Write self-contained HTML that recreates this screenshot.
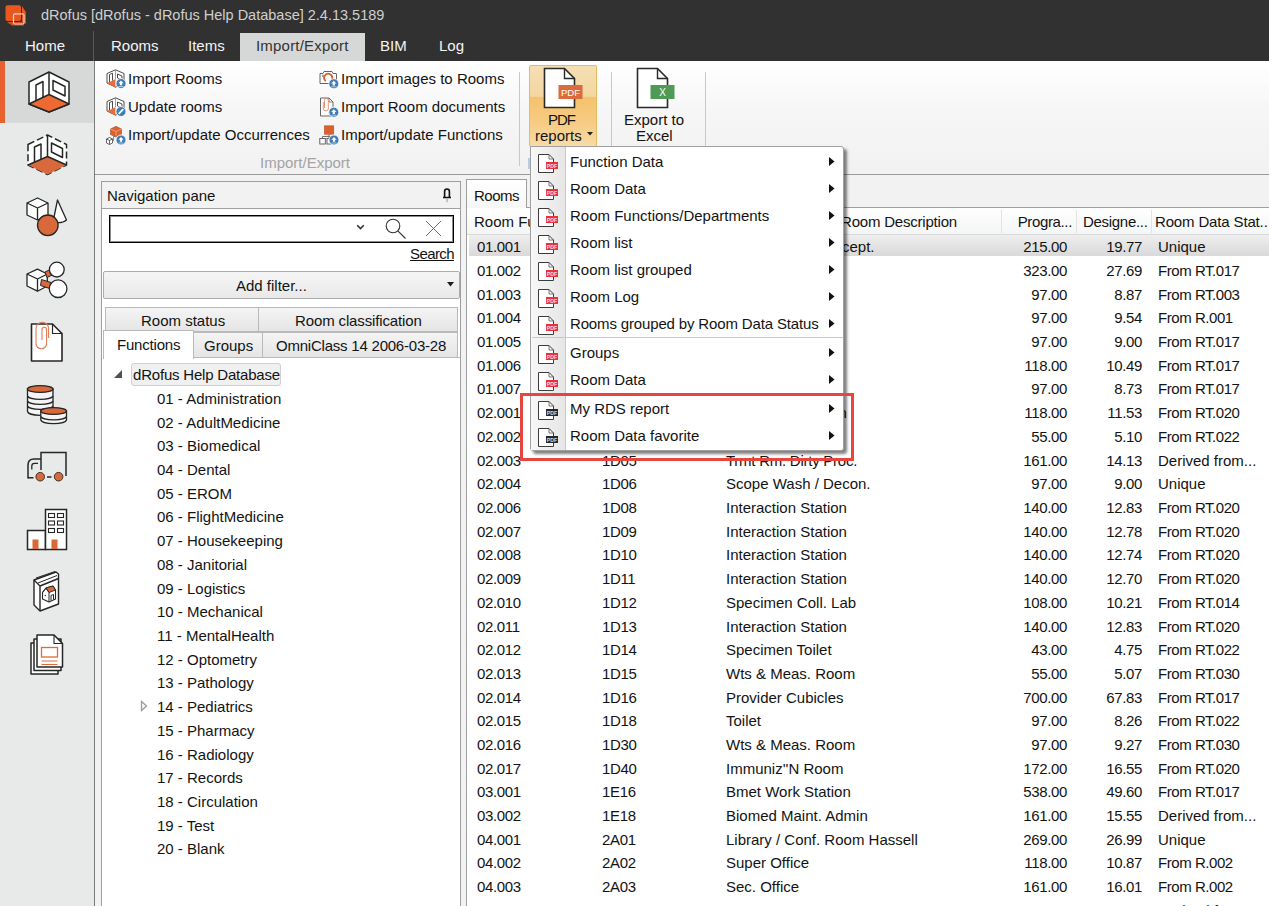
<!DOCTYPE html><html><head><meta charset="utf-8"><style>
html,body{margin:0;padding:0;}
body{width:1269px;height:906px;overflow:hidden;position:relative;background:#f2f2f2;font-family:"Liberation Sans",sans-serif;}
.t{position:absolute;white-space:nowrap;line-height:normal;}
.b{position:absolute;box-sizing:border-box;}
svg{position:absolute;overflow:visible;}
</style></head><body>
<div class="b" style="left:0px;top:0px;width:1269px;height:61px;background:#313131;"></div>
<svg style="left:0;top:0" width="40" height="32">
<path d="M22 6 L25.8 12 L25.8 24 L22 22Z" fill="#e8581f"/>
<path d="M7 22 L22 22 L24.5 25.5 L12 25.5Z" fill="#e8581f" opacity="0.9"/>
<rect x="5.5" y="5.3" width="15.5" height="15.7" rx="2" fill="#e8581f"/>
<rect x="13.5" y="13.8" width="10.5" height="10.2" rx="1.5" fill="none" stroke="#f5d3c2" stroke-width="1.2"/>
</svg>
<div class="t " style="left:41px;top:7.38px;font-size:14.5px;color:#cfcfcf;">dRofus [dRofus - dRofus Help Database] 2.4.13.5189</div>
<div class="b" style="left:93px;top:31px;width:1px;height:30px;background:#5a5a5a;"></div>
<div class="t " style="left:25px;top:36.92px;font-size:15px;color:#f4f4f4;">Home</div>
<div class="t " style="left:111px;top:36.92px;font-size:15px;color:#f4f4f4;">Rooms</div>
<div class="t " style="left:188px;top:36.92px;font-size:15px;color:#f4f4f4;">Items</div>
<div class="b" style="left:240px;top:33px;width:125px;height:28px;background:#d6d7d7;"></div>
<div class="t " style="left:256px;top:36.92px;font-size:15px;color:#333333;letter-spacing:0.2px;">Import/Export</div>
<div class="t " style="left:380px;top:36.92px;font-size:15px;color:#f4f4f4;">BIM</div>
<div class="t " style="left:439px;top:36.92px;font-size:15px;color:#f4f4f4;">Log</div>
<div class="b" style="left:0px;top:61px;width:94px;height:845px;background:#e8e9e9;"></div>
<div class="b" style="left:94px;top:61px;width:1px;height:845px;background:#7b7b7b;"></div>
<div class="b" style="left:0px;top:61px;width:94px;height:62px;background:#d7d9d9;"></div>
<div class="b" style="left:0px;top:61px;width:5px;height:62px;background:#e8602c;"></div>
<div class="b" style="left:95px;top:61px;width:1174px;height:113px;background:linear-gradient(#ffffff 0%,#f6f6f6 45%,#f1f1f1 100%);"></div>
<div class="b" style="left:95px;top:174px;width:1174px;height:1px;background:#9a9a9a;"></div>
<svg style="left:0;top:0" width="94" height="700">
<g stroke="#262626" stroke-width="1.5" stroke-linejoin="round" fill="#fff">
<path d="M29 82 L49 72 L69 82 L69 104 L49 112 L29 104Z"/>
<path d="M29 104 L49 94.5 L69 104 L49 112Z" fill="#ef6a33"/>
<path d="M49 72 L49 94.5" fill="none"/>
<path d="M36 100.5 L36 85 L43 81.5 L43 97.3" fill="none"/>
<path d="M53 80.5 L65 86.5 L65 96 L53 90Z" fill="none"/>
</g>
<g stroke="#262626" stroke-width="1.5" stroke-linejoin="round" fill="#fff" stroke-dasharray="7 3">
<path d="M28 144.5 L47.5 135 L66.5 144.5 L66.5 165 L47.5 174.5 L28 165Z"/>
</g>
<g stroke="#262626" stroke-width="1.5" stroke-linejoin="round" fill="#fff">
<path d="M28 165 L47.5 156.5 L66.5 165 L47.5 174.5Z" fill="#d9693a" stroke="none"/>
<path d="M28 165 L47.5 156.5 L66.5 165" fill="none"/>
<path d="M47.5 135 L47.5 156.5" fill="none"/>
<path d="M34.5 162 L34.5 147 L41 144 L41 159" fill="none"/>
<path d="M51.5 143 L62.5 148.5 L62.5 157.5 L51.5 152Z" fill="none"/>
</g>
<g stroke="#262626" stroke-width="1.3" stroke-linejoin="round" fill="#fff">
<path d="M57.5 200 L66.5 220 Q62 224 53 222 Z"/>
<path d="M27 203 L37.5 198 L48 203 L48 215 L37.5 220 L27 215Z"/>
<path d="M27 203 L37.5 208 L48 203 M37.5 208 L37.5 220" fill="none"/>
<circle cx="47.8" cy="225.3" r="10.3" fill="#d9693a"/>
</g>
<g stroke="#262626" stroke-width="1.3" stroke-linejoin="round" fill="#fff">
<path d="M27 274 L37.5 269.2 L47.3 274 L47.3 286 L37.5 291.2 L27 286Z"/>
<path d="M27 274 L37.5 279 L47.3 274 M37.5 279 L37.5 291.2" fill="none"/>
<path d="M45 272 L53.5 268 L55.5 273.5 L47 277.5Z" fill="#d9693a" stroke-width="1"/>
<path d="M41.5 279.5 L51 282.5 L49.8 288.5 L40.5 285.5Z" fill="#d9693a" stroke-width="1"/>
<circle cx="56.8" cy="269.6" r="7.4"/>
<circle cx="58.1" cy="288.7" r="8.8"/>
</g>
<g stroke="#262626" stroke-width="1.6" stroke-linejoin="round" fill="#fff">
<path d="M31.5 324 L52.5 324 L62 333.5 L62 361 L31.5 361Z"/>
<path d="M52.5 324 L52.5 333.5 L62 333.5" fill="none" stroke-width="1.2"/>
</g>
<path d="M42 340 L42 329.5 A2.3 2.3 0 0 1 46.6 329.5 L46.6 343.5 A5.3 5.3 0 0 1 36 343.5 L36 328.5 A6.3 6.3 0 0 1 48.6 328.5 L48.6 338" fill="none" stroke="#e07b55" stroke-width="1.1"/>
<g stroke="#262626" stroke-width="1.3" fill="#f4f4f4">
<path d="M27.5 389 L27.5 411.5 A12.8 4.2 0 0 0 53 411.5 L53 389Z"/>
<path d="M27.5 396 A12.8 3.6 0 0 0 53 396 M27.5 401 A12.8 3.6 0 0 0 53 401 M27.5 406 A12.8 3.6 0 0 0 53 406" fill="none"/>
<ellipse cx="40.2" cy="389" rx="12.8" ry="3.4" fill="#d9693a"/>
<path d="M40.8 411 L40.8 420 A12.9 4 0 0 0 66.5 420 L66.5 411Z"/>
<path d="M40.8 416.5 A12.9 3.6 0 0 0 66.5 416.5" fill="none"/>
<ellipse cx="53.6" cy="411" rx="12.9" ry="3.4" fill="#d9693a"/>
</g>
<g stroke="#262626" stroke-width="1.5" fill="none">
<path d="M41 470 L41 452.5 L66 452.5 L66 476"/>
<path d="M28 478.5 L28 465 Q28 459 34 459 L41 459"/>
<path d="M31.8 469.5 L31.8 466 Q31.8 463.3 34.5 463.3 L38 463.3" stroke-width="1.3"/>
<path d="M28 477.8 L33.5 477.8 M47 477 L51.5 477"/>
</g>
<circle cx="40.2" cy="476.7" r="4.3" fill="#d9693a" stroke="#262626" stroke-width="0.9"/>
<circle cx="58.6" cy="476.7" r="4.3" fill="#d9693a" stroke="#262626" stroke-width="0.9"/>
<g stroke="#262626" stroke-width="1.5" fill="#fff">
<rect x="27.5" y="530.5" width="18" height="19"/>
<rect x="45.5" y="509.5" width="21" height="40"/>
</g>
<g stroke="#262626" stroke-width="1.1" fill="#fff">
<rect x="48.5" y="513.5" width="6" height="4"/><rect x="57.5" y="513.5" width="6" height="4"/>
<rect x="48.5" y="521" width="6" height="4"/><rect x="57.5" y="521" width="6" height="4"/>
<rect x="48.5" y="528.5" width="6" height="4"/><rect x="57.5" y="528.5" width="6" height="4"/>
</g>
<rect x="32.5" y="539.5" width="6" height="9.5" fill="#d9693a"/>
<rect x="51.5" y="539.5" width="6" height="9.5" fill="#d9693a"/>
<g stroke="#262626" stroke-width="1.4" stroke-linejoin="round" fill="#fff">
<path d="M56 572 L58.5 574 L58.5 604 L40 611 L34 605 L34 580Z"/>
<path d="M34 580 L40 586 L58.5 578.5 M40 586 L40 611" fill="none"/>
<path d="M36 578 L55 571.5 M38 583 L57 575.5" fill="none" stroke-width="1"/>
<path d="M42.5 592.5 L46 588 L53 586 L55.5 590 L55.5 599 L49 602 L42.5 599Z" stroke-width="1.1"/>
<path d="M46 588 L53 586 L55.5 590 L49 592.5Z" fill="#d9693a" stroke-width="0.9"/>
<path d="M42.5 592.5 L46 588 L49 592.5 L49 602" fill="none" stroke-width="1"/>
<path d="M51 600.5 L51 595.5 L53.5 594.5 L53.5 599.5" fill="none" stroke-width="1"/>
<circle cx="45.3" cy="595.5" r="0.7" fill="#262626" stroke="none"/>
</g>
<g stroke="#262626" stroke-width="1.5" stroke-linejoin="round" fill="#fff">
<path d="M31 643 L31 674 L58 674 L58 643Z" fill="#fff"/>
<path d="M34 639 L34 670.5 L61 670.5 L61 639Z"/>
<path d="M37 635 L54 635 L62.5 643.5 L62.5 667 L37 667Z"/>
<path d="M54 635 L54 643.5 L62.5 643.5" fill="none" stroke-width="1.1"/>
</g>
<rect x="41.5" y="647.5" width="16" height="9.5" fill="none" stroke="#e06a3a" stroke-width="1.3"/>
<path d="M41.5 661 L57.5 661 M41.5 664.5 L57.5 664.5" stroke="#e06a3a" stroke-width="1.1"/>
</svg>
<!--BODY-->
<svg style="left:106px;top:69px" width="21" height="21"><g stroke="#3a3a3a" stroke-width="0.9" fill="#fff">
<path d="M1 4.5 L9.5 0.8 L18 4.5 L18 14 L9.5 18.2 L1 14Z"/>
<path d="M1 14 L9.5 10 L9.5 18.2Z" fill="#ef6b35" stroke="none"/>
<path d="M9.5 0.8 L9.5 10" stroke="#999"/>
<path d="M3.5 13 L3.5 5.5 L6.5 4.2 L6.5 11.6"/>
<path d="M11.5 5 L16 7 L16 11 L11.5 9Z"/>
</g><circle cx="15" cy="14.5" r="5" fill="#3f7db6" stroke="#fff" stroke-width="0.8"/><path d="M15 11.5 L17.6 14.3 L16.1 14.3 L16.1 16.3 L13.9 16.3 L13.9 14.3 L12.4 14.3Z" fill="#fff"/><path d="M12.5 17.5 L17.5 17.5" stroke="#fff" stroke-width="0.6"/></svg>
<div class="t " style="left:128px;top:70.42px;font-size:15px;color:#131313;">Import Rooms</div>
<svg style="left:106px;top:97px" width="21" height="21"><g stroke="#3a3a3a" stroke-width="0.9" fill="#fff">
<path d="M1 4.5 L9.5 0.8 L18 4.5 L18 14 L9.5 18.2 L1 14Z"/>
<path d="M1 14 L9.5 10 L9.5 18.2Z" fill="#ef6b35" stroke="none"/>
<path d="M9.5 0.8 L9.5 10" stroke="#999"/>
<path d="M3.5 13 L3.5 5.5 L6.5 4.2 L6.5 11.6"/>
<path d="M11.5 5 L16 7 L16 11 L11.5 9Z"/>
</g><circle cx="15" cy="14.5" r="5" fill="#3f7db6" stroke="#fff" stroke-width="0.8"/><path d="M12.7 16.8 L17.3 12.2" stroke="#fff" stroke-width="1.8"/></svg>
<div class="t " style="left:128px;top:98.42px;font-size:15px;color:#131313;">Update rooms</div>
<svg style="left:106px;top:125px" width="21" height="21"><path d="M4.5 4 L10 1.3 L15.5 4 L15.5 9.5 L10 12 L4.5 9.5Z" fill="#d9622f" stroke="#a84a22" stroke-width="0.6"/>
<path d="M4.5 4 L10 6.5 L15.5 4 M10 6.5 L10 12" stroke="#f3b595" stroke-width="0.7" fill="none"/>
<path d="M0.5 14 L3.5 12.5 L6.5 14 L6.5 18 L3.5 19.5 L0.5 18Z M0.5 14 L3.5 15.5 L6.5 14 M3.5 15.5 L3.5 19.5" fill="#fff" stroke="#444" stroke-width="0.8"/>
<path d="M7.5 16 L7.5 11.5 L10 11" fill="none" stroke="#666" stroke-width="0.7"/><circle cx="15" cy="15" r="5" fill="#3f7db6" stroke="#fff" stroke-width="0.8"/><path d="M15 12 L17.6 14.8 L16.1 14.8 L16.1 16.8 L13.9 16.8 L13.9 14.8 L12.4 14.8Z" fill="#fff"/><path d="M12.5 18 L17.5 18" stroke="#fff" stroke-width="0.6"/></svg>
<div class="t " style="left:128px;top:126.42px;font-size:15px;color:#131313;">Import/update Occurrences</div>
<svg style="left:319px;top:69px" width="21" height="21"><path d="M1 4.5 L4 4.5 L5 2.5 L13 2.5 L14 4.5 L17 4.5 Q17.5 4.5 17.5 5 L17.5 14.5 L1 14.5Z" fill="#fff" stroke="#555" stroke-width="0.9" stroke-linejoin="round"/>
<circle cx="4" cy="6.8" r="0.9" fill="none" stroke="#555" stroke-width="0.6"/>
<path d="M6.8 12 A4 4 0 1 1 13 10" fill="none" stroke="#d9622f" stroke-width="1.8"/><circle cx="14.8" cy="14.8" r="5" fill="#3f7db6" stroke="#fff" stroke-width="0.8"/><path d="M14.8 11.8 L17.400000000000002 14.600000000000001 L15.9 14.600000000000001 L15.9 16.6 L13.700000000000001 16.6 L13.700000000000001 14.600000000000001 L12.200000000000001 14.600000000000001Z" fill="#fff"/><path d="M12.3 17.8 L17.3 17.8" stroke="#fff" stroke-width="0.6"/></svg>
<div class="t " style="left:341px;top:70.42px;font-size:15px;color:#131313;">Import images to Rooms</div>
<svg style="left:319px;top:97px" width="21" height="21"><path d="M1.5 1 L10 1 L14 5 L14 19 L1.5 19Z" fill="#fff" stroke="#555" stroke-width="0.9" stroke-linejoin="round"/>
<path d="M10 1 L10 5 L14 5" fill="none" stroke="#555" stroke-width="0.7"/>
<path d="M5.5 11 L5.5 3.5 Q5.5 1.2 7.4 1.2 Q9.3 1.2 9.3 3.5 L9.3 12 Q9.3 13.8 7.2 13.8 Q4.3 13.8 4.3 12 L4.3 5" fill="none" stroke="#e58a66" stroke-width="0.9"/><circle cx="14.8" cy="15.2" r="5" fill="#3f7db6" stroke="#fff" stroke-width="0.8"/><path d="M14.8 12.2 L17.400000000000002 15.0 L15.9 15.0 L15.9 17.0 L13.700000000000001 17.0 L13.700000000000001 15.0 L12.200000000000001 15.0Z" fill="#fff"/><path d="M12.3 18.2 L17.3 18.2" stroke="#fff" stroke-width="0.6"/></svg>
<div class="t " style="left:341px;top:98.42px;font-size:15px;color:#131313;">Import Room documents</div>
<svg style="left:319px;top:125px" width="21" height="21"><rect x="5.3" y="0.8" width="9.5" height="8.5" fill="#d9622f" stroke="#b85125" stroke-width="0.5"/>
<path d="M10 9.3 L10 11.5 M3.5 11.5 L16.5 11.5 M3.5 11.5 L3.5 13.5 M10 11.5 L10 13.5" stroke="#666" stroke-width="0.9" fill="none"/>
<rect x="0.8" y="13.5" width="5.5" height="5.5" fill="#fff" stroke="#555" stroke-width="0.9"/>
<rect x="8" y="13.5" width="4" height="5.5" fill="#fff" stroke="#555" stroke-width="0.9"/><circle cx="15" cy="15" r="5" fill="#3f7db6" stroke="#fff" stroke-width="0.8"/><path d="M15 12 L17.6 14.8 L16.1 14.8 L16.1 16.8 L13.9 16.8 L13.9 14.8 L12.4 14.8Z" fill="#fff"/><path d="M12.5 18 L17.5 18" stroke="#fff" stroke-width="0.6"/></svg>
<div class="t " style="left:341px;top:126.42px;font-size:15px;color:#131313;">Import/update Functions</div>
<div class="t " style="left:260px;top:154.43px;font-size:15px;color:#a3a3a3;">Import/Export</div>
<div class="b" style="left:519px;top:72px;width:1px;height:94px;background:#c8c8c8;"></div>
<div class="b" style="left:611px;top:72px;width:1px;height:74px;background:#c8c8c8;"></div>
<div class="b" style="left:705px;top:72px;width:1px;height:74px;background:#c8c8c8;"></div>
<div class="b" style="left:529px;top:65px;width:68px;height:82px;border:1px solid #e3bd5c;border-radius:2px;background:linear-gradient(#f5dfb4 0%,#f3d6a1 38%,#f5c26c 39%,#f6cb83 70%,#f8dba6 100%);"></div>
<svg style="left:543px;top:67px" width="42" height="44">
<path d="M1.5 1.5 L21.5 1.5 L31.5 11.5 L31.5 40.5 L1.5 40.5Z" fill="#fff" stroke="#2a2a2a" stroke-width="1.6"/>
<path d="M21.5 1.5 L21.5 11.5 L31.5 11.5" fill="none" stroke="#2a2a2a" stroke-width="1.4"/>
<rect x="15.5" y="18" width="24" height="14" fill="#dc6a3c"/>
<text x="27.5" y="28.5" font-family="Liberation Sans" font-size="9.5" fill="#fff" text-anchor="middle">PDF</text>
</svg>
<div class="t " style="left:548px;top:110.92px;font-size:15px;color:#131313;letter-spacing:-1px;">PDF</div>
<div class="t " style="left:535px;top:126.92px;font-size:15px;color:#131313;">reports</div>
<svg style="left:587px;top:132px" width="6" height="4"><path d="M0 0 L6 0 L3 3.5Z" fill="#222"/></svg>
<svg style="left:636px;top:67px" width="42" height="44">
<path d="M1.5 1.5 L21.5 1.5 L31.5 11.5 L31.5 40.5 L1.5 40.5Z" fill="#fff" stroke="#2a2a2a" stroke-width="1.6"/>
<path d="M21.5 1.5 L21.5 11.5 L31.5 11.5" fill="none" stroke="#2a2a2a" stroke-width="1.4"/>
<rect x="14.5" y="18" width="24" height="14" fill="#4f9b56"/>
<text x="26.5" y="28.5" font-family="Liberation Sans" font-size="10" fill="#fff" text-anchor="middle">X</text>
</svg>
<div class="t " style="left:624px;top:110.92px;font-size:15px;color:#131313;">Export to</div>
<div class="t " style="left:636px;top:126.92px;font-size:15px;color:#131313;">Excel</div>
<div class="b" style="left:101px;top:181px;width:360px;height:725px;border:1px solid #9e9e9e;border-bottom:none;background:#fff;"></div>
<div class="b" style="left:102px;top:182px;width:358px;height:27px;background:#f2f2f2;border-bottom:1px solid #a0a0a0;"></div>
<div class="t " style="left:107px;top:187.43px;font-size:15px;color:#131313;">Navigation pane</div>
<svg style="left:441px;top:187px" width="12" height="16"><path d="M3.6 10 L3.6 4.5 Q3.6 2 6 2 Q8.4 2 8.4 4.5 L8.4 10" fill="none" stroke="#111" stroke-width="1.6"/><path d="M2 10.5 L10 10.5" stroke="#111" stroke-width="1.5"/><rect x="5.4" y="11.2" width="1.3" height="4" fill="#aaa"/></svg>
<div class="b" style="left:109px;top:215px;width:345px;height:28px;border:1px solid #000;box-shadow:inset 0 0 0 1px rgba(0,0,0,0.45);background:#fff;"></div>
<svg style="left:356px;top:224px" width="10" height="7"><path d="M1.2 1.2 L4.5 4.5 L7.8 1.2" fill="none" stroke="#333" stroke-width="1.6"/></svg>
<svg style="left:383px;top:216px" width="26" height="26"><circle cx="10" cy="10" r="6.8" fill="none" stroke="#333" stroke-width="1.1"/><path d="M14.8 14.8 L22.5 22.5" stroke="#333" stroke-width="1.1"/></svg>
<svg style="left:424px;top:219px" width="20" height="20"><path d="M2 2 L17 17 M17 2 L2 17" stroke="#5a5a5a" stroke-width="0.9"/></svg>
<div class="t" style="right:815px;top:244.93px;font-size:15px;color:#131313;text-align:right;text-decoration:underline;letter-spacing:-0.6px;">Search</div>
<div class="b" style="left:103px;top:271px;width:357px;height:28px;border:1px solid #adadad;border-radius:2px;background:linear-gradient(#f5f5f5,#e9e9e9);"></div>
<div class="t " style="left:236px;top:276.93px;font-size:15px;color:#131313;">Add filter...</div>
<svg style="left:447px;top:282px" width="8" height="5"><path d="M0 0 L7 0 L3.5 4.5Z" fill="#1d1d1d"/></svg>
<div class="b" style="left:105px;top:307px;width:154px;height:25px;background:linear-gradient(#f4f4f4,#e5e5e5);border:1px solid #b9b9b9;"></div>
<div class="b" style="left:258px;top:307px;width:200px;height:25px;background:linear-gradient(#f4f4f4,#e5e5e5);border:1px solid #b9b9b9;"></div>
<div class="t " style="left:141px;top:311.93px;font-size:15px;color:#131313;">Room status</div>
<div class="t " style="left:295px;top:311.93px;font-size:15px;color:#131313;letter-spacing:-0.13px;">Room classification</div>
<div class="b" style="left:193px;top:332px;width:70px;height:26px;background:linear-gradient(#f4f4f4,#e5e5e5);border:1px solid #b9b9b9;"></div>
<div class="b" style="left:262px;top:332px;width:196px;height:26px;background:linear-gradient(#f4f4f4,#e5e5e5);border:1px solid #b9b9b9;"></div>
<div class="b" style="left:103px;top:330px;width:91px;height:29px;background:#fff;border:1px solid #b9b9b9;border-bottom:none;"></div>
<div class="t " style="left:117px;top:336.43px;font-size:15px;color:#131313;letter-spacing:-0.2px;">Functions</div>
<div class="t " style="left:204px;top:336.93px;font-size:15px;color:#131313;">Groups</div>
<div class="t " style="left:276px;top:336.93px;font-size:15px;color:#131313;letter-spacing:-0.22px;">OmniClass 14 2006-03-28</div>
<div class="b" style="left:262px;top:357px;width:198px;height:1px;background:#b9b9b9;"></div>
<svg style="left:113px;top:369px" width="10" height="10"><path d="M9 1 L9 9 L1 9Z" fill="#505050"/></svg>
<div class="b" style="left:131px;top:363px;width:150px;height:23px;background:#f0f0f0;border:1px solid #d0d0d0;border-radius:3px;"></div>
<div class="t " style="left:133px;top:366.43px;font-size:15px;color:#131313;letter-spacing:-0.2px;">dRofus Help Database</div>
<div class="t " style="left:157px;top:390.43px;font-size:15px;color:#131313;">01 - Administration</div>
<div class="t " style="left:157px;top:414.43px;font-size:15px;color:#131313;">02 - AdultMedicine</div>
<div class="t " style="left:157px;top:437.43px;font-size:15px;color:#131313;">03 - Biomedical</div>
<div class="t " style="left:157px;top:461.43px;font-size:15px;color:#131313;">04 - Dental</div>
<div class="t " style="left:157px;top:485.43px;font-size:15px;color:#131313;">05 - EROM</div>
<div class="t " style="left:157px;top:508.43px;font-size:15px;color:#131313;">06 - FlightMedicine</div>
<div class="t " style="left:157px;top:532.42px;font-size:15px;color:#131313;">07 - Housekeeping</div>
<div class="t " style="left:157px;top:556.42px;font-size:15px;color:#131313;">08 - Janitorial</div>
<div class="t " style="left:157px;top:580.42px;font-size:15px;color:#131313;">09 - Logistics</div>
<div class="t " style="left:157px;top:603.42px;font-size:15px;color:#131313;">10 - Mechanical</div>
<div class="t " style="left:157px;top:627.42px;font-size:15px;color:#131313;">11 - MentalHealth</div>
<div class="t " style="left:157px;top:651.42px;font-size:15px;color:#131313;">12 - Optometry</div>
<div class="t " style="left:157px;top:674.42px;font-size:15px;color:#131313;">13 - Pathology</div>
<div class="t " style="left:157px;top:698.42px;font-size:15px;color:#131313;">14 - Pediatrics</div>
<div class="t " style="left:157px;top:722.42px;font-size:15px;color:#131313;">15 - Pharmacy</div>
<div class="t " style="left:157px;top:746.42px;font-size:15px;color:#131313;">16 - Radiology</div>
<div class="t " style="left:157px;top:769.42px;font-size:15px;color:#131313;">17 - Records</div>
<div class="t " style="left:157px;top:793.42px;font-size:15px;color:#131313;">18 - Circulation</div>
<div class="t " style="left:157px;top:817.42px;font-size:15px;color:#131313;">19 - Test</div>
<div class="t " style="left:157px;top:840.42px;font-size:15px;color:#131313;">20 - Blank</div>
<svg style="left:140px;top:700px" width="8" height="12"><path d="M1.5 1.5 L6.5 6 L1.5 10.5Z" fill="none" stroke="#9a9a9a" stroke-width="1.3"/></svg>
<div class="b" style="left:466px;top:207px;width:803px;height:699px;border-left:1px solid #9e9e9e;border-top:1px solid #9e9e9e;background:#fff;"></div>
<div class="b" style="left:466px;top:179px;width:61px;height:29px;border:1px solid #9e9e9e;border-bottom:none;background:linear-gradient(#ffffff,#f6f6f6);"></div>
<div class="t " style="left:474px;top:187.43px;font-size:15px;color:#131313;letter-spacing:-0.5px;">Rooms</div>
<div class="b" style="left:467px;top:208px;width:802px;height:27px;background:linear-gradient(#ffffff,#f4f5f6);border-bottom:1px solid #dadada;"></div>
<div class="b" style="left:1001px;top:210px;width:1px;height:23px;background:#e2e2e2;"></div>
<div class="b" style="left:1076px;top:210px;width:1px;height:23px;background:#e2e2e2;"></div>
<div class="b" style="left:1151px;top:210px;width:1px;height:23px;background:#e2e2e2;"></div>
<div class="t " style="left:474px;top:212.93px;font-size:15px;color:#131313;">Room Function No.</div>
<div class="t " style="left:841px;top:212.93px;font-size:15px;color:#131313;letter-spacing:-0.2px;">Room Description</div>
<div class="t" style="right:197px;top:212.93px;font-size:15px;color:#131313;text-align:right;letter-spacing:-0.35px;">Progra...</div>
<div class="t " style="left:1083px;top:212.93px;font-size:15px;color:#131313;letter-spacing:-0.3px;">Designe...</div>
<div class="t " style="left:1155px;top:212.93px;font-size:15px;color:#131313;letter-spacing:-0.15px;">Room Data Stat...</div>
<div class="b" style="left:469px;top:235px;width:800px;height:21px;background:linear-gradient(#eeeeee,#d9d9d9);"></div>
<div class="t " style="left:477px;top:238.43px;font-size:15px;color:#131313;letter-spacing:-0.35px;">01.001</div>
<div class="t " style="left:842px;top:238.43px;font-size:15px;color:#131313;">cept.</div>
<div class="t" style="right:202px;top:238.43px;font-size:15px;color:#131313;text-align:right;letter-spacing:-0.35px;">215.00</div>
<div class="t" style="right:127px;top:238.43px;font-size:15px;color:#131313;text-align:right;letter-spacing:-0.35px;">19.77</div>
<div class="t " style="left:1158px;top:238.43px;font-size:15px;color:#131313;">Unique</div>
<div class="t " style="left:477px;top:262.43px;font-size:15px;color:#131313;letter-spacing:-0.35px;">01.002</div>
<div class="t" style="right:202px;top:262.43px;font-size:15px;color:#131313;text-align:right;letter-spacing:-0.35px;">323.00</div>
<div class="t" style="right:127px;top:262.43px;font-size:15px;color:#131313;text-align:right;letter-spacing:-0.35px;">27.69</div>
<div class="t " style="left:1158px;top:262.43px;font-size:15px;color:#131313;letter-spacing:-0.45px;">From RT.017</div>
<div class="t " style="left:477px;top:286.43px;font-size:15px;color:#131313;letter-spacing:-0.35px;">01.003</div>
<div class="t" style="right:202px;top:286.43px;font-size:15px;color:#131313;text-align:right;letter-spacing:-0.35px;">97.00</div>
<div class="t" style="right:127px;top:286.43px;font-size:15px;color:#131313;text-align:right;letter-spacing:-0.35px;">8.87</div>
<div class="t " style="left:1158px;top:286.43px;font-size:15px;color:#131313;letter-spacing:-0.45px;">From RT.003</div>
<div class="t " style="left:477px;top:309.43px;font-size:15px;color:#131313;letter-spacing:-0.35px;">01.004</div>
<div class="t" style="right:202px;top:309.43px;font-size:15px;color:#131313;text-align:right;letter-spacing:-0.35px;">97.00</div>
<div class="t" style="right:127px;top:309.43px;font-size:15px;color:#131313;text-align:right;letter-spacing:-0.35px;">9.54</div>
<div class="t " style="left:1158px;top:309.43px;font-size:15px;color:#131313;letter-spacing:-0.45px;">From R.001</div>
<div class="t " style="left:477px;top:333.43px;font-size:15px;color:#131313;letter-spacing:-0.35px;">01.005</div>
<div class="t" style="right:202px;top:333.43px;font-size:15px;color:#131313;text-align:right;letter-spacing:-0.35px;">97.00</div>
<div class="t" style="right:127px;top:333.43px;font-size:15px;color:#131313;text-align:right;letter-spacing:-0.35px;">9.00</div>
<div class="t " style="left:1158px;top:333.43px;font-size:15px;color:#131313;letter-spacing:-0.45px;">From RT.017</div>
<div class="t " style="left:477px;top:357.43px;font-size:15px;color:#131313;letter-spacing:-0.35px;">01.006</div>
<div class="t" style="right:202px;top:357.43px;font-size:15px;color:#131313;text-align:right;letter-spacing:-0.35px;">118.00</div>
<div class="t" style="right:127px;top:357.43px;font-size:15px;color:#131313;text-align:right;letter-spacing:-0.35px;">10.49</div>
<div class="t " style="left:1158px;top:357.43px;font-size:15px;color:#131313;letter-spacing:-0.45px;">From RT.017</div>
<div class="t " style="left:477px;top:380.43px;font-size:15px;color:#131313;letter-spacing:-0.35px;">01.007</div>
<div class="t" style="right:202px;top:380.43px;font-size:15px;color:#131313;text-align:right;letter-spacing:-0.35px;">97.00</div>
<div class="t" style="right:127px;top:380.43px;font-size:15px;color:#131313;text-align:right;letter-spacing:-0.35px;">8.73</div>
<div class="t " style="left:1158px;top:380.43px;font-size:15px;color:#131313;letter-spacing:-0.45px;">From RT.017</div>
<div class="t " style="left:477px;top:404.43px;font-size:15px;color:#131313;letter-spacing:-0.35px;">02.001</div>
<div class="t " style="left:602px;top:404.43px;font-size:15px;color:#131313;letter-spacing:-0.35px;">1D03</div>
<div class="t " style="left:726px;top:404.43px;font-size:15px;color:#131313;">Interaction Station</div>
<div class="t" style="right:202px;top:404.43px;font-size:15px;color:#131313;text-align:right;letter-spacing:-0.35px;">118.00</div>
<div class="t" style="right:127px;top:404.43px;font-size:15px;color:#131313;text-align:right;letter-spacing:-0.35px;">11.53</div>
<div class="t " style="left:1158px;top:404.43px;font-size:15px;color:#131313;letter-spacing:-0.45px;">From RT.020</div>
<div class="t " style="left:477px;top:428.43px;font-size:15px;color:#131313;letter-spacing:-0.35px;">02.002</div>
<div class="t" style="right:202px;top:428.43px;font-size:15px;color:#131313;text-align:right;letter-spacing:-0.35px;">55.00</div>
<div class="t" style="right:127px;top:428.43px;font-size:15px;color:#131313;text-align:right;letter-spacing:-0.35px;">5.10</div>
<div class="t " style="left:1158px;top:428.43px;font-size:15px;color:#131313;letter-spacing:-0.45px;">From RT.022</div>
<div class="t " style="left:477px;top:452.43px;font-size:15px;color:#131313;letter-spacing:-0.35px;">02.003</div>
<div class="t " style="left:602px;top:452.43px;font-size:15px;color:#131313;letter-spacing:-0.35px;">1D05</div>
<div class="t " style="left:726px;top:452.43px;font-size:15px;color:#131313;letter-spacing:-0.25px;">Trmt Rm. Dirty Proc.</div>
<div class="t" style="right:202px;top:452.43px;font-size:15px;color:#131313;text-align:right;letter-spacing:-0.35px;">161.00</div>
<div class="t" style="right:127px;top:452.43px;font-size:15px;color:#131313;text-align:right;letter-spacing:-0.35px;">14.13</div>
<div class="t " style="left:1158px;top:452.43px;font-size:15px;color:#131313;">Derived from...</div>
<div class="t " style="left:477px;top:475.43px;font-size:15px;color:#131313;letter-spacing:-0.35px;">02.004</div>
<div class="t " style="left:602px;top:475.43px;font-size:15px;color:#131313;letter-spacing:-0.35px;">1D06</div>
<div class="t " style="left:726px;top:475.43px;font-size:15px;color:#131313;">Scope Wash / Decon.</div>
<div class="t" style="right:202px;top:475.43px;font-size:15px;color:#131313;text-align:right;letter-spacing:-0.35px;">97.00</div>
<div class="t" style="right:127px;top:475.43px;font-size:15px;color:#131313;text-align:right;letter-spacing:-0.35px;">9.00</div>
<div class="t " style="left:1158px;top:475.43px;font-size:15px;color:#131313;">Unique</div>
<div class="t " style="left:477px;top:499.43px;font-size:15px;color:#131313;letter-spacing:-0.35px;">02.006</div>
<div class="t " style="left:602px;top:499.43px;font-size:15px;color:#131313;letter-spacing:-0.35px;">1D08</div>
<div class="t " style="left:726px;top:499.43px;font-size:15px;color:#131313;">Interaction Station</div>
<div class="t" style="right:202px;top:499.43px;font-size:15px;color:#131313;text-align:right;letter-spacing:-0.35px;">140.00</div>
<div class="t" style="right:127px;top:499.43px;font-size:15px;color:#131313;text-align:right;letter-spacing:-0.35px;">12.83</div>
<div class="t " style="left:1158px;top:499.43px;font-size:15px;color:#131313;letter-spacing:-0.45px;">From RT.020</div>
<div class="t " style="left:477px;top:523.42px;font-size:15px;color:#131313;letter-spacing:-0.35px;">02.007</div>
<div class="t " style="left:602px;top:523.42px;font-size:15px;color:#131313;letter-spacing:-0.35px;">1D09</div>
<div class="t " style="left:726px;top:523.42px;font-size:15px;color:#131313;">Interaction Station</div>
<div class="t" style="right:202px;top:523.42px;font-size:15px;color:#131313;text-align:right;letter-spacing:-0.35px;">140.00</div>
<div class="t" style="right:127px;top:523.42px;font-size:15px;color:#131313;text-align:right;letter-spacing:-0.35px;">12.78</div>
<div class="t " style="left:1158px;top:523.42px;font-size:15px;color:#131313;letter-spacing:-0.45px;">From RT.020</div>
<div class="t " style="left:477px;top:546.42px;font-size:15px;color:#131313;letter-spacing:-0.35px;">02.008</div>
<div class="t " style="left:602px;top:546.42px;font-size:15px;color:#131313;letter-spacing:-0.35px;">1D10</div>
<div class="t " style="left:726px;top:546.42px;font-size:15px;color:#131313;">Interaction Station</div>
<div class="t" style="right:202px;top:546.42px;font-size:15px;color:#131313;text-align:right;letter-spacing:-0.35px;">140.00</div>
<div class="t" style="right:127px;top:546.42px;font-size:15px;color:#131313;text-align:right;letter-spacing:-0.35px;">12.74</div>
<div class="t " style="left:1158px;top:546.42px;font-size:15px;color:#131313;letter-spacing:-0.45px;">From RT.020</div>
<div class="t " style="left:477px;top:570.42px;font-size:15px;color:#131313;letter-spacing:-0.35px;">02.009</div>
<div class="t " style="left:602px;top:570.42px;font-size:15px;color:#131313;letter-spacing:-0.35px;">1D11</div>
<div class="t " style="left:726px;top:570.42px;font-size:15px;color:#131313;">Interaction Station</div>
<div class="t" style="right:202px;top:570.42px;font-size:15px;color:#131313;text-align:right;letter-spacing:-0.35px;">140.00</div>
<div class="t" style="right:127px;top:570.42px;font-size:15px;color:#131313;text-align:right;letter-spacing:-0.35px;">12.70</div>
<div class="t " style="left:1158px;top:570.42px;font-size:15px;color:#131313;letter-spacing:-0.45px;">From RT.020</div>
<div class="t " style="left:477px;top:594.42px;font-size:15px;color:#131313;letter-spacing:-0.35px;">02.010</div>
<div class="t " style="left:602px;top:594.42px;font-size:15px;color:#131313;letter-spacing:-0.35px;">1D12</div>
<div class="t " style="left:726px;top:594.42px;font-size:15px;color:#131313;">Specimen Coll. Lab</div>
<div class="t" style="right:202px;top:594.42px;font-size:15px;color:#131313;text-align:right;letter-spacing:-0.35px;">108.00</div>
<div class="t" style="right:127px;top:594.42px;font-size:15px;color:#131313;text-align:right;letter-spacing:-0.35px;">10.21</div>
<div class="t " style="left:1158px;top:594.42px;font-size:15px;color:#131313;letter-spacing:-0.45px;">From RT.014</div>
<div class="t " style="left:477px;top:618.42px;font-size:15px;color:#131313;letter-spacing:-0.35px;">02.011</div>
<div class="t " style="left:602px;top:618.42px;font-size:15px;color:#131313;letter-spacing:-0.35px;">1D13</div>
<div class="t " style="left:726px;top:618.42px;font-size:15px;color:#131313;">Interaction Station</div>
<div class="t" style="right:202px;top:618.42px;font-size:15px;color:#131313;text-align:right;letter-spacing:-0.35px;">140.00</div>
<div class="t" style="right:127px;top:618.42px;font-size:15px;color:#131313;text-align:right;letter-spacing:-0.35px;">12.83</div>
<div class="t " style="left:1158px;top:618.42px;font-size:15px;color:#131313;letter-spacing:-0.45px;">From RT.020</div>
<div class="t " style="left:477px;top:641.42px;font-size:15px;color:#131313;letter-spacing:-0.35px;">02.012</div>
<div class="t " style="left:602px;top:641.42px;font-size:15px;color:#131313;letter-spacing:-0.35px;">1D14</div>
<div class="t " style="left:726px;top:641.42px;font-size:15px;color:#131313;">Specimen Toilet</div>
<div class="t" style="right:202px;top:641.42px;font-size:15px;color:#131313;text-align:right;letter-spacing:-0.35px;">43.00</div>
<div class="t" style="right:127px;top:641.42px;font-size:15px;color:#131313;text-align:right;letter-spacing:-0.35px;">4.75</div>
<div class="t " style="left:1158px;top:641.42px;font-size:15px;color:#131313;letter-spacing:-0.45px;">From RT.022</div>
<div class="t " style="left:477px;top:665.42px;font-size:15px;color:#131313;letter-spacing:-0.35px;">02.013</div>
<div class="t " style="left:602px;top:665.42px;font-size:15px;color:#131313;letter-spacing:-0.35px;">1D15</div>
<div class="t " style="left:726px;top:665.42px;font-size:15px;color:#131313;">Wts &amp; Meas. Room</div>
<div class="t" style="right:202px;top:665.42px;font-size:15px;color:#131313;text-align:right;letter-spacing:-0.35px;">55.00</div>
<div class="t" style="right:127px;top:665.42px;font-size:15px;color:#131313;text-align:right;letter-spacing:-0.35px;">5.07</div>
<div class="t " style="left:1158px;top:665.42px;font-size:15px;color:#131313;letter-spacing:-0.45px;">From RT.030</div>
<div class="t " style="left:477px;top:689.42px;font-size:15px;color:#131313;letter-spacing:-0.35px;">02.014</div>
<div class="t " style="left:602px;top:689.42px;font-size:15px;color:#131313;letter-spacing:-0.35px;">1D16</div>
<div class="t " style="left:726px;top:689.42px;font-size:15px;color:#131313;">Provider Cubicles</div>
<div class="t" style="right:202px;top:689.42px;font-size:15px;color:#131313;text-align:right;letter-spacing:-0.35px;">700.00</div>
<div class="t" style="right:127px;top:689.42px;font-size:15px;color:#131313;text-align:right;letter-spacing:-0.35px;">67.83</div>
<div class="t " style="left:1158px;top:689.42px;font-size:15px;color:#131313;letter-spacing:-0.45px;">From RT.017</div>
<div class="t " style="left:477px;top:712.42px;font-size:15px;color:#131313;letter-spacing:-0.35px;">02.015</div>
<div class="t " style="left:602px;top:712.42px;font-size:15px;color:#131313;letter-spacing:-0.35px;">1D18</div>
<div class="t " style="left:726px;top:712.42px;font-size:15px;color:#131313;">Toilet</div>
<div class="t" style="right:202px;top:712.42px;font-size:15px;color:#131313;text-align:right;letter-spacing:-0.35px;">97.00</div>
<div class="t" style="right:127px;top:712.42px;font-size:15px;color:#131313;text-align:right;letter-spacing:-0.35px;">8.26</div>
<div class="t " style="left:1158px;top:712.42px;font-size:15px;color:#131313;letter-spacing:-0.45px;">From RT.022</div>
<div class="t " style="left:477px;top:736.42px;font-size:15px;color:#131313;letter-spacing:-0.35px;">02.016</div>
<div class="t " style="left:602px;top:736.42px;font-size:15px;color:#131313;letter-spacing:-0.35px;">1D30</div>
<div class="t " style="left:726px;top:736.42px;font-size:15px;color:#131313;">Wts &amp; Meas. Room</div>
<div class="t" style="right:202px;top:736.42px;font-size:15px;color:#131313;text-align:right;letter-spacing:-0.35px;">97.00</div>
<div class="t" style="right:127px;top:736.42px;font-size:15px;color:#131313;text-align:right;letter-spacing:-0.35px;">9.27</div>
<div class="t " style="left:1158px;top:736.42px;font-size:15px;color:#131313;letter-spacing:-0.45px;">From RT.030</div>
<div class="t " style="left:477px;top:760.42px;font-size:15px;color:#131313;letter-spacing:-0.35px;">02.017</div>
<div class="t " style="left:602px;top:760.42px;font-size:15px;color:#131313;letter-spacing:-0.35px;">1D40</div>
<div class="t " style="left:726px;top:760.42px;font-size:15px;color:#131313;">Immuniz&#x27;&#x27;N Room</div>
<div class="t" style="right:202px;top:760.42px;font-size:15px;color:#131313;text-align:right;letter-spacing:-0.35px;">172.00</div>
<div class="t" style="right:127px;top:760.42px;font-size:15px;color:#131313;text-align:right;letter-spacing:-0.35px;">16.55</div>
<div class="t " style="left:1158px;top:760.42px;font-size:15px;color:#131313;letter-spacing:-0.45px;">From RT.020</div>
<div class="t " style="left:477px;top:783.42px;font-size:15px;color:#131313;letter-spacing:-0.35px;">03.001</div>
<div class="t " style="left:602px;top:783.42px;font-size:15px;color:#131313;letter-spacing:-0.35px;">1E16</div>
<div class="t " style="left:726px;top:783.42px;font-size:15px;color:#131313;">Bmet Work Station</div>
<div class="t" style="right:202px;top:783.42px;font-size:15px;color:#131313;text-align:right;letter-spacing:-0.35px;">538.00</div>
<div class="t" style="right:127px;top:783.42px;font-size:15px;color:#131313;text-align:right;letter-spacing:-0.35px;">49.60</div>
<div class="t " style="left:1158px;top:783.42px;font-size:15px;color:#131313;letter-spacing:-0.45px;">From RT.017</div>
<div class="t " style="left:477px;top:807.42px;font-size:15px;color:#131313;letter-spacing:-0.35px;">03.002</div>
<div class="t " style="left:602px;top:807.42px;font-size:15px;color:#131313;letter-spacing:-0.35px;">1E18</div>
<div class="t " style="left:726px;top:807.42px;font-size:15px;color:#131313;">Biomed Maint. Admin</div>
<div class="t" style="right:202px;top:807.42px;font-size:15px;color:#131313;text-align:right;letter-spacing:-0.35px;">161.00</div>
<div class="t" style="right:127px;top:807.42px;font-size:15px;color:#131313;text-align:right;letter-spacing:-0.35px;">15.55</div>
<div class="t " style="left:1158px;top:807.42px;font-size:15px;color:#131313;">Derived from...</div>
<div class="t " style="left:477px;top:831.42px;font-size:15px;color:#131313;letter-spacing:-0.35px;">04.001</div>
<div class="t " style="left:602px;top:831.42px;font-size:15px;color:#131313;letter-spacing:-0.35px;">2A01</div>
<div class="t " style="left:726px;top:831.42px;font-size:15px;color:#131313;">Library / Conf. Room Hassell</div>
<div class="t" style="right:202px;top:831.42px;font-size:15px;color:#131313;text-align:right;letter-spacing:-0.35px;">269.00</div>
<div class="t" style="right:127px;top:831.42px;font-size:15px;color:#131313;text-align:right;letter-spacing:-0.35px;">26.99</div>
<div class="t " style="left:1158px;top:831.42px;font-size:15px;color:#131313;">Unique</div>
<div class="t " style="left:477px;top:854.42px;font-size:15px;color:#131313;letter-spacing:-0.35px;">04.002</div>
<div class="t " style="left:602px;top:854.42px;font-size:15px;color:#131313;letter-spacing:-0.35px;">2A02</div>
<div class="t " style="left:726px;top:854.42px;font-size:15px;color:#131313;">Super Office</div>
<div class="t" style="right:202px;top:854.42px;font-size:15px;color:#131313;text-align:right;letter-spacing:-0.35px;">118.00</div>
<div class="t" style="right:127px;top:854.42px;font-size:15px;color:#131313;text-align:right;letter-spacing:-0.35px;">10.87</div>
<div class="t " style="left:1158px;top:854.42px;font-size:15px;color:#131313;letter-spacing:-0.45px;">From R.002</div>
<div class="t " style="left:477px;top:878.42px;font-size:15px;color:#131313;letter-spacing:-0.35px;">04.003</div>
<div class="t " style="left:602px;top:878.42px;font-size:15px;color:#131313;letter-spacing:-0.35px;">2A03</div>
<div class="t " style="left:726px;top:878.42px;font-size:15px;color:#131313;">Sec. Office</div>
<div class="t" style="right:202px;top:878.42px;font-size:15px;color:#131313;text-align:right;letter-spacing:-0.35px;">161.00</div>
<div class="t" style="right:127px;top:878.42px;font-size:15px;color:#131313;text-align:right;letter-spacing:-0.35px;">16.01</div>
<div class="t " style="left:1158px;top:878.42px;font-size:15px;color:#131313;letter-spacing:-0.45px;">From R.002</div>
<div class="t " style="left:477px;top:902.42px;font-size:15px;color:#131313;letter-spacing:-0.35px;">04.004</div>
<div class="t " style="left:602px;top:902.42px;font-size:15px;color:#131313;letter-spacing:-0.35px;">2A04</div>
<div class="t " style="left:726px;top:902.42px;font-size:15px;color:#131313;">DENTAL CHF SPCL OFFICE</div>
<div class="t" style="right:202px;top:902.42px;font-size:15px;color:#131313;text-align:right;letter-spacing:-0.35px;">161.00</div>
<div class="t" style="right:127px;top:902.42px;font-size:15px;color:#131313;text-align:right;letter-spacing:-0.35px;">16.01</div>
<div class="t " style="left:1158px;top:902.42px;font-size:15px;color:#131313;">Derived from...</div>
<div class="b" style="left:528px;top:158px;width:2px;height:11px;background:#b8cde3;"></div>
<div class="b" style="left:530px;top:146px;width:314px;height:305px;background:#fff;border:1px solid #a0a0a0;border-radius:0 3px 3px 3px;box-shadow:3px 3px 3px rgba(0,0,0,0.5);"></div>
<div class="b" style="left:531px;top:147px;width:34px;height:303px;background:linear-gradient(90deg,#f7f7f7,#e6e6e6);"></div>
<div class="b" style="left:565px;top:147px;width:1px;height:190px;background:#c9c9c9;"></div>
<div class="b" style="left:565px;top:338px;width:1px;height:112px;background:#c9c9c9;"></div>
<div class="b" style="left:532px;top:337px;width:311px;height:1px;background:#c9c9c9;"></div>
<svg style="left:537px;top:153px" width="24" height="22">
<path d="M1.5 1.5 L12 1.5 L16.5 6 L16.5 19.5 L1.5 19.5Z" fill="#fff" stroke="#3c3c3c" stroke-width="1"/>
<path d="M12 1.5 L12 6 L16.5 6" fill="none" stroke="#555" stroke-width="0.8"/>
<rect x="9" y="9" width="12" height="7" fill="#e8323c"/>
<text x="15" y="14.6" font-family="Liberation Sans" font-size="5.2" font-weight="bold" fill="#fff" fill-opacity="0.85" text-anchor="middle">PDF</text>
</svg>
<div class="t " style="left:570px;top:153.43px;font-size:15px;color:#131313;">Function Data</div>
<svg style="left:829px;top:157px" width="6" height="9"><path d="M0 0 L5.5 4.5 L0 9Z" fill="#111"/></svg>
<svg style="left:537px;top:180px" width="24" height="22">
<path d="M1.5 1.5 L12 1.5 L16.5 6 L16.5 19.5 L1.5 19.5Z" fill="#fff" stroke="#3c3c3c" stroke-width="1"/>
<path d="M12 1.5 L12 6 L16.5 6" fill="none" stroke="#555" stroke-width="0.8"/>
<rect x="9" y="9" width="12" height="7" fill="#e8323c"/>
<text x="15" y="14.6" font-family="Liberation Sans" font-size="5.2" font-weight="bold" fill="#fff" fill-opacity="0.85" text-anchor="middle">PDF</text>
</svg>
<div class="t " style="left:570px;top:180.43px;font-size:15px;color:#131313;">Room Data</div>
<svg style="left:829px;top:184px" width="6" height="9"><path d="M0 0 L5.5 4.5 L0 9Z" fill="#111"/></svg>
<svg style="left:537px;top:207px" width="24" height="22">
<path d="M1.5 1.5 L12 1.5 L16.5 6 L16.5 19.5 L1.5 19.5Z" fill="#fff" stroke="#3c3c3c" stroke-width="1"/>
<path d="M12 1.5 L12 6 L16.5 6" fill="none" stroke="#555" stroke-width="0.8"/>
<rect x="9" y="9" width="12" height="7" fill="#e8323c"/>
<text x="15" y="14.6" font-family="Liberation Sans" font-size="5.2" font-weight="bold" fill="#fff" fill-opacity="0.85" text-anchor="middle">PDF</text>
</svg>
<div class="t " style="left:570px;top:207.43px;font-size:15px;color:#131313;">Room Functions/Departments</div>
<svg style="left:829px;top:211px" width="6" height="9"><path d="M0 0 L5.5 4.5 L0 9Z" fill="#111"/></svg>
<svg style="left:537px;top:234px" width="24" height="22">
<path d="M1.5 1.5 L12 1.5 L16.5 6 L16.5 19.5 L1.5 19.5Z" fill="#fff" stroke="#3c3c3c" stroke-width="1"/>
<path d="M12 1.5 L12 6 L16.5 6" fill="none" stroke="#555" stroke-width="0.8"/>
<rect x="9" y="9" width="12" height="7" fill="#e8323c"/>
<text x="15" y="14.6" font-family="Liberation Sans" font-size="5.2" font-weight="bold" fill="#fff" fill-opacity="0.85" text-anchor="middle">PDF</text>
</svg>
<div class="t " style="left:570px;top:234.43px;font-size:15px;color:#131313;">Room list</div>
<svg style="left:829px;top:238px" width="6" height="9"><path d="M0 0 L5.5 4.5 L0 9Z" fill="#111"/></svg>
<svg style="left:537px;top:261px" width="24" height="22">
<path d="M1.5 1.5 L12 1.5 L16.5 6 L16.5 19.5 L1.5 19.5Z" fill="#fff" stroke="#3c3c3c" stroke-width="1"/>
<path d="M12 1.5 L12 6 L16.5 6" fill="none" stroke="#555" stroke-width="0.8"/>
<rect x="9" y="9" width="12" height="7" fill="#e8323c"/>
<text x="15" y="14.6" font-family="Liberation Sans" font-size="5.2" font-weight="bold" fill="#fff" fill-opacity="0.85" text-anchor="middle">PDF</text>
</svg>
<div class="t " style="left:570px;top:261.43px;font-size:15px;color:#131313;">Room list grouped</div>
<svg style="left:829px;top:265px" width="6" height="9"><path d="M0 0 L5.5 4.5 L0 9Z" fill="#111"/></svg>
<svg style="left:537px;top:288px" width="24" height="22">
<path d="M1.5 1.5 L12 1.5 L16.5 6 L16.5 19.5 L1.5 19.5Z" fill="#fff" stroke="#3c3c3c" stroke-width="1"/>
<path d="M12 1.5 L12 6 L16.5 6" fill="none" stroke="#555" stroke-width="0.8"/>
<rect x="9" y="9" width="12" height="7" fill="#e8323c"/>
<text x="15" y="14.6" font-family="Liberation Sans" font-size="5.2" font-weight="bold" fill="#fff" fill-opacity="0.85" text-anchor="middle">PDF</text>
</svg>
<div class="t " style="left:570px;top:288.43px;font-size:15px;color:#131313;">Room Log</div>
<svg style="left:829px;top:292px" width="6" height="9"><path d="M0 0 L5.5 4.5 L0 9Z" fill="#111"/></svg>
<svg style="left:537px;top:315px" width="24" height="22">
<path d="M1.5 1.5 L12 1.5 L16.5 6 L16.5 19.5 L1.5 19.5Z" fill="#fff" stroke="#3c3c3c" stroke-width="1"/>
<path d="M12 1.5 L12 6 L16.5 6" fill="none" stroke="#555" stroke-width="0.8"/>
<rect x="9" y="9" width="12" height="7" fill="#e8323c"/>
<text x="15" y="14.6" font-family="Liberation Sans" font-size="5.2" font-weight="bold" fill="#fff" fill-opacity="0.85" text-anchor="middle">PDF</text>
</svg>
<div class="t " style="left:570px;top:315.43px;font-size:15px;color:#131313;letter-spacing:-0.15px;">Rooms grouped by Room Data Status</div>
<svg style="left:829px;top:319px" width="6" height="9"><path d="M0 0 L5.5 4.5 L0 9Z" fill="#111"/></svg>
<svg style="left:537px;top:344px" width="24" height="22">
<path d="M1.5 1.5 L12 1.5 L16.5 6 L16.5 19.5 L1.5 19.5Z" fill="#fff" stroke="#3c3c3c" stroke-width="1"/>
<path d="M12 1.5 L12 6 L16.5 6" fill="none" stroke="#555" stroke-width="0.8"/>
<rect x="9" y="9" width="12" height="7" fill="#e8323c"/>
<text x="15" y="14.6" font-family="Liberation Sans" font-size="5.2" font-weight="bold" fill="#fff" fill-opacity="0.85" text-anchor="middle">PDF</text>
</svg>
<div class="t " style="left:570px;top:344.43px;font-size:15px;color:#131313;">Groups</div>
<svg style="left:829px;top:348px" width="6" height="9"><path d="M0 0 L5.5 4.5 L0 9Z" fill="#111"/></svg>
<svg style="left:537px;top:371px" width="24" height="22">
<path d="M1.5 1.5 L12 1.5 L16.5 6 L16.5 19.5 L1.5 19.5Z" fill="#fff" stroke="#3c3c3c" stroke-width="1"/>
<path d="M12 1.5 L12 6 L16.5 6" fill="none" stroke="#555" stroke-width="0.8"/>
<rect x="9" y="9" width="12" height="7" fill="#e8323c"/>
<text x="15" y="14.6" font-family="Liberation Sans" font-size="5.2" font-weight="bold" fill="#fff" fill-opacity="0.85" text-anchor="middle">PDF</text>
</svg>
<div class="t " style="left:570px;top:371.43px;font-size:15px;color:#131313;">Room Data</div>
<svg style="left:829px;top:375px" width="6" height="9"><path d="M0 0 L5.5 4.5 L0 9Z" fill="#111"/></svg>
<svg style="left:537px;top:400px" width="24" height="22">
<path d="M1.5 1.5 L12 1.5 L16.5 6 L16.5 19.5 L1.5 19.5Z" fill="#fff" stroke="#3c3c3c" stroke-width="1"/>
<path d="M12 1.5 L12 6 L16.5 6" fill="none" stroke="#555" stroke-width="0.8"/>
<rect x="9" y="9" width="12" height="7" fill="#262626"/>
<text x="15" y="14.6" font-family="Liberation Sans" font-size="5.2" font-weight="bold" fill="#fff" fill-opacity="0.85" text-anchor="middle">PDF</text>
</svg>
<div class="t " style="left:570px;top:400.43px;font-size:15px;color:#131313;">My RDS report</div>
<svg style="left:829px;top:404px" width="6" height="9"><path d="M0 0 L5.5 4.5 L0 9Z" fill="#111"/></svg>
<svg style="left:537px;top:427px" width="24" height="22">
<path d="M1.5 1.5 L12 1.5 L16.5 6 L16.5 19.5 L1.5 19.5Z" fill="#fff" stroke="#3c3c3c" stroke-width="1"/>
<path d="M12 1.5 L12 6 L16.5 6" fill="none" stroke="#555" stroke-width="0.8"/>
<rect x="9" y="9" width="12" height="7" fill="#262626"/>
<text x="15" y="14.6" font-family="Liberation Sans" font-size="5.2" font-weight="bold" fill="#fff" fill-opacity="0.85" text-anchor="middle">PDF</text>
</svg>
<div class="t " style="left:570px;top:427.43px;font-size:15px;color:#131313;">Room Data favorite</div>
<svg style="left:829px;top:431px" width="6" height="9"><path d="M0 0 L5.5 4.5 L0 9Z" fill="#111"/></svg>
<div class="b" style="left:520px;top:393px;width:334px;height:68px;border:3px solid #e6463d;"></div>
</body></html>
